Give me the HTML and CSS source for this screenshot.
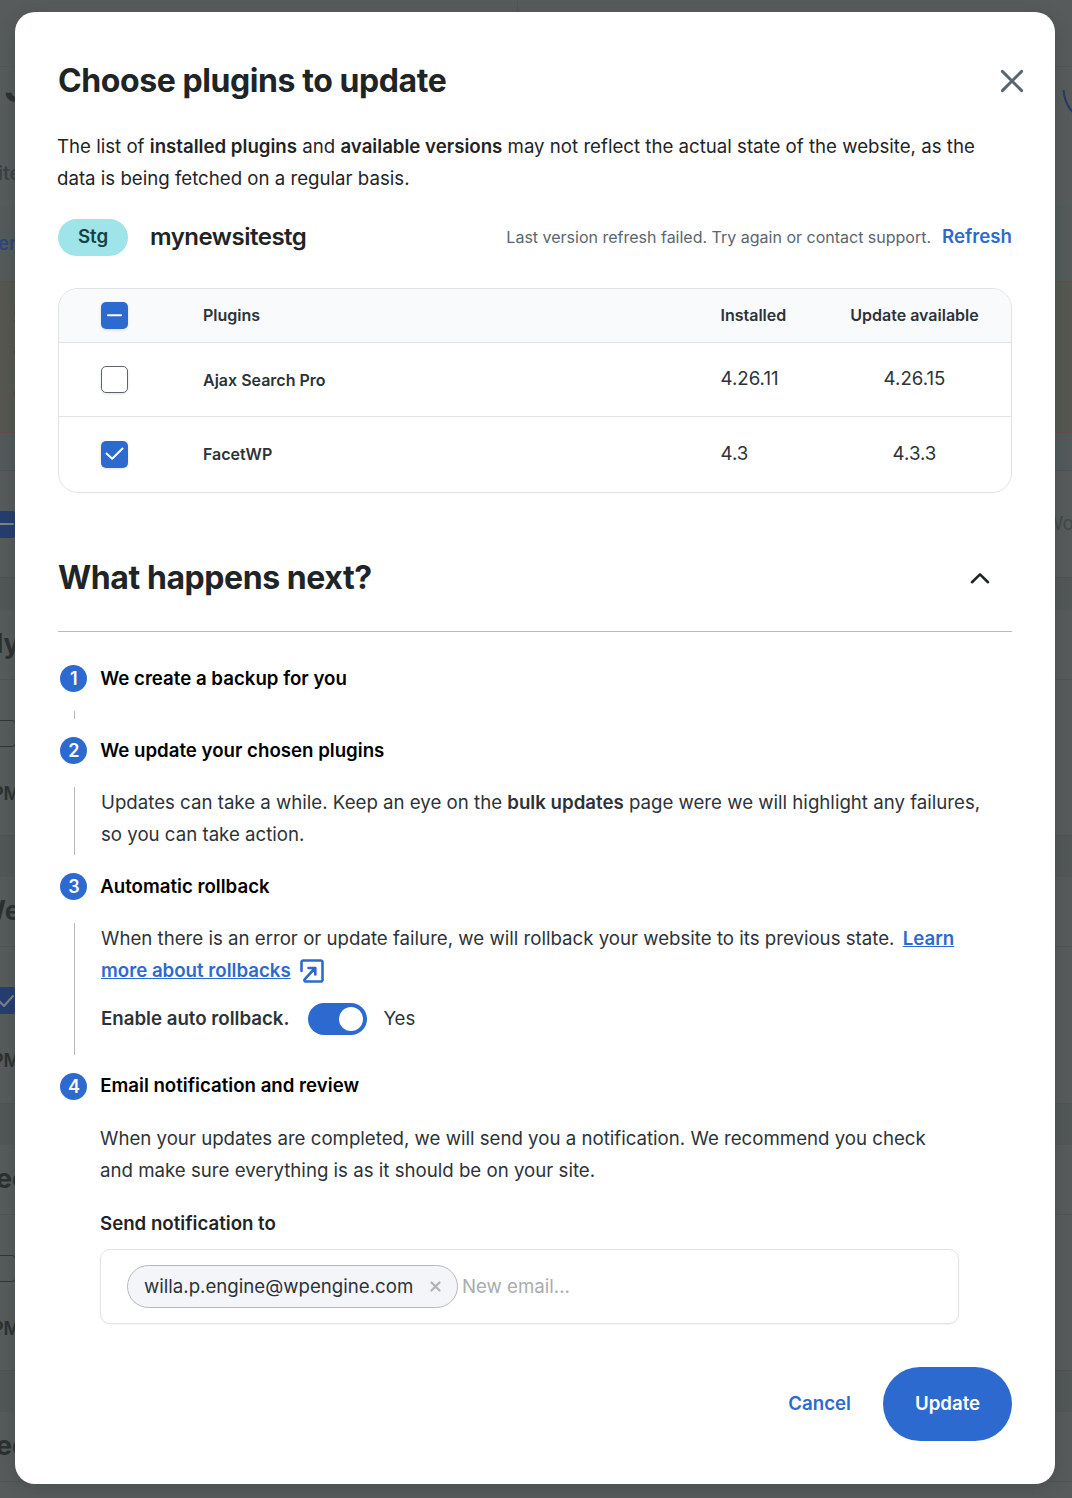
FILE: index.html
```html
<!DOCTYPE html>
<html lang="en">
<head>
    <meta charset="UTF-8">
    <meta name="viewport" content="width=device-width, initial-scale=1.0">
    <title>Choose plugins to update</title>
    <link rel="stylesheet" href="styles.css">
</head>
<body>

    <!-- Page behind the modal -->
    <div class="page" aria-hidden="true">
        <div class="page-top"><div class="page-top-left"></div></div>
        <div class="page-nav"></div>
        <div class="page-title">
            <span class="page-heading">S</span>
            <svg class="ring" width="10" height="34" viewBox="0 0 10 34"><circle cx="37.5" cy="-2" r="36"/></svg>
        </div>
        <div class="page-sub"><span>ites</span></div>
        <div class="page-tabs"><span>er</span></div>
        <div class="page-notice"><span>S</span><span>v</span><span>c</span></div>
        <div class="page-gap"></div>
        <div class="page-head">
            <span class="page-box page-box-on"><svg width="28" height="28" viewBox="0 0 28 28"><path d="M8 13h17"/></svg></span>
            <span class="page-word">Wo</span>
        </div>
        <div class="page-band page-band-first"></div>
        <div class="page-site"><span class="shift-ly">ly</span></div>
        <div class="page-item"><span class="page-box"></span><b>PM</b></div>
        <div class="page-band"></div>
        <div class="page-site"><span class="shift-we">We</span></div>
        <div class="page-item page-item-on"><span class="page-box page-box-on"><svg width="28" height="28" viewBox="0 0 28 28"><path d="M11 14l5 5 9-10"/></svg></span><b>PM</b></div>
        <div class="page-band"></div>
        <div class="page-site"><span>ee</span></div>
        <div class="page-item"><span class="page-box"></span><b>PM</b></div>
        <div class="page-band"></div>
        <div class="page-site"><span>ee</span></div>
        <div class="page-rest"></div>
    </div>

    <div class="modal" role="dialog">
        <div class="modal-header">
            <h1>Choose plugins to update</h1>
            <button class="close-button" aria-label="Close">
                <svg width="24" height="24" viewBox="0 0 24 24"><path d="M2.4 2.4l19.2 19.2M21.6 2.4L2.4 21.6"/></svg>
            </button>
        </div>

        <p class="intro">The list of <b>installed plugins</b> and <b>available versions</b> may not reflect the actual state of the website, as the<br>data is being fetched on a regular basis.</p>

        <div class="site">
            <span class="badge">Stg</span>
            <h2>mynewsitestg</h2>
            <span class="refresh-note">Last version refresh failed. Try again or contact support.</span>
            <a class="refresh">Refresh</a>
        </div>

        <div class="plugins">
            <div class="row row-head">
                <span class="check check-on"><svg width="27" height="27" viewBox="0 0 27 27"><path d="M7 13.2h13"/></svg></span>
                <span>Plugins</span>
                <span>Installed</span>
                <span class="center">Update available</span>
            </div>
            <div class="row">
                <span class="check"></span>
                <b>Ajax Search Pro</b>
                <span class="version">4.26.11</span>
                <span class="version center">4.26.15</span>
            </div>
            <div class="row row-last">
                <span class="check check-on"><svg width="27" height="27" viewBox="0 0 27 27"><path d="M5.5 12.5l5.7 5.3L21.5 7.5"/></svg></span>
                <b>FacetWP</b>
                <span class="version">4.3</span>
                <span class="version center">4.3.3</span>
            </div>
        </div>

        <div class="next-header">
            <h1>What happens next?</h1>
            <svg width="22" height="14" viewBox="0 0 22 14"><path d="M3 11.2l8-7.8 8 7.8"/></svg>
        </div>

        <div class="step step-1">
            <div class="step-title"><span class="number">1</span><h3>We create a backup for you</h3></div>
            <div class="step-body"></div>
        </div>

        <div class="step step-2">
            <div class="step-title"><span class="number">2</span><h3>We update your chosen plugins</h3></div>
            <div class="step-body">
                <p>Updates can take a while. Keep an eye on the <b>bulk updates</b> page were we will highlight any failures,<br>so you can take action.</p>
            </div>
        </div>

        <div class="step step-3">
            <div class="step-title"><span class="number">3</span><h3>Automatic rollback</h3></div>
            <div class="step-body">
                <p>When there is an error or update failure, we will rollback your website to its previous state. <a class="learn">Learn</a></p>
                <p class="link-line"><a>more about rollbacks</a>
                    <svg width="24" height="24" viewBox="0 0 24 24"><path d="M1.5 12V3.3a1.8 1.8 0 0 1 1.8-1.8h17.4a1.8 1.8 0 0 1 1.8 1.8v17.4a1.8 1.8 0 0 1-1.8 1.8H5.6a1.3 1.3 0 0 1-.9-2.2L15 9M8.5 9h6.8v6.5"/></svg>
                </p>
                <div class="rollback">
                    <b>Enable auto rollback.</b>
                    <span class="toggle"><span class="knob"></span></span>
                    <span>Yes</span>
                </div>
            </div>
        </div>

        <div class="step step-4">
            <div class="step-title"><span class="number">4</span><h3>Email notification and review</h3></div>
            <div class="step-body">
                <p>When your updates are completed, we will send you a notification. We recommend you check<br>and make sure everything is as it should be on your site.</p>
                <h4>Send notification to</h4>
                <div class="emails">
                    <span class="chip">willa.p.engine@wpengine.com
                        <svg width="11" height="11" viewBox="0 0 11 11"><path d="M1.5 1.5l8 8M9.5 1.5l-8 8"/></svg>
                    </span>
                    <span class="placeholder">New email...</span>
                </div>
            </div>
        </div>

        <div class="actions">
            <button class="cancel">Cancel</button>
            <button class="update">Update</button>
        </div>
    </div>

</body>
</html>
```
FILE: styles.css
```css
* {
    box-sizing: border-box;
}

body {
    margin: 0;
    width: 1072px;
    height: 1498px;
    overflow: hidden;
    position: relative;
    font-family: Inter, sans-serif;
    font-size: 18.66px;
    line-height: 32px;
    color: #2c3338;
    background: #565a5a;
}

h1, h2, h3, h4, p {
    margin: 0;
}

b {
    font-weight: 600;
}

svg {
    display: block;
    fill: none;
    stroke-linecap: round;
    stroke-linejoin: round;
}

button {
    border: none;
    background: none;
    padding: 0;
    font: inherit;
}

/* Page behind */
.page {
    overflow: hidden;
    height: 1498px;
    background: #575b5b;
    color: #2c3031;
    white-space: nowrap;
}

.page-top {
    height: 67px;
    border-bottom: 1px solid #515656;
}

.page-top-left {
    width: 518px;
    height: 12px;
    border-right: 1px solid #515555;
}

.page-nav {
    height: 23px;
}

.page-title {
    height: 66px;
    display: flex;
    justify-content: space-between;
    overflow: hidden;
}

.page-heading {
    font-size: 40px;
    font-weight: 700;
    line-height: 40px;
    margin: -22px 0 0 4px;
}

.ring {
    stroke: #253a66;
    stroke-width: 2;
    overflow: hidden;
}

.page-sub {
    height: 50px;
    line-height: 36px;
    color: #3c4244;
    font-size: 19px;
    font-weight: 600;
}

.page-sub span {
    margin-left: -2px;
}

.page-tabs {
    height: 75px;
    line-height: 75px;
    background: #545b5b;
    color: #2f4677;
    font-weight: 600;
}

.page-tabs span {
    margin-left: -2px;
}

.page-notice {
    height: 152px;
    padding: 20px 0 0 13px;
    display: flex;
    flex-direction: column;
    gap: 6px;
    background: #565850;
    border-top: 1px solid #5f504a;
    border-bottom: 1px solid #664d48;
    color: #663b38;
}

.page-gap {
    height: 38px;
    background: #535a5b;
    border-bottom: 1px solid #4f5455;
}

.page-head {
    height: 106px;
    display: flex;
    align-items: center;
    justify-content: space-between;
}

.page-word {
    width: 27px;
    color: #424848;
    font-size: 18.66px;
}

.page-box {
    display: block;
    width: 28px;
    height: 27px;
    margin-left: -12px;
    border: 1px solid #303536;
    border-radius: 4px;
    flex: none;
}

.page-box-on {
    border: none;
    background: #253e70;
}

.page-box svg {
    stroke: #7d8389;
    stroke-width: 2;
}

.page-band {
    height: 42px;
    background: #535758;
    border-top: 1px solid #4f5354;
}

.page-band-first {
    height: 33px;
}

.page-site {
    height: 70px;
    line-height: 68px;
    border-bottom: 1px solid #505455;
    font-size: 27px;
    font-weight: 700;
}

.page-site span {
    margin-left: -4px;
}

.page-site .shift-we {
    margin-left: -22px;
}

.page-item {
    height: 155px;
    padding-top: 40px;
}

.page-item-on {
    height: 156px;
}

.page-item b {
    display: block;
    margin: 31px 0 0 -8px;
    font-size: 18px;
}

/* Modal */
.modal {
    position: absolute;
    left: 15px;
    top: 12px;
    width: 1040px;
    height: 1472px;
    padding: 49px 43px 0;
    background: #fff;
    border-radius: 20px;
    box-shadow: 0 4px 16px rgba(40, 50, 50, .3);
    white-space: nowrap;
}

.modal-header {
    display: flex;
    justify-content: space-between;
    height: 70px;
}

h1 {
    font-size: 32px;
    line-height: 40px;
    font-weight: 700;
    letter-spacing: -0.42px;
    color: #1f2426;
}

.close-button {
    width: 24px;
    height: 24px;
    margin: 8px -12px 0 0;
}

.close-button svg {
    stroke: #5a666d;
    stroke-width: 2.9;
}

.intro {
    margin-left: -1px;
    color: #1f2426;
}

.site {
    display: flex;
    align-items: center;
    height: 37px;
    margin-top: 24px;
}

.badge {
    width: 70px;
    height: 37px;
    border-radius: 19px;
    line-height: 35px;
    text-align: center;
    font-weight: 600;
    background: #9fe4e8;
    color: #164045;
}

h2 {
    margin: -2px 0 0 22px;
    font-size: 24px;
    font-weight: 600;
    letter-spacing: -0.5px;
    color: #1f2426;
}

.refresh-note {
    margin: -2px 0 0 auto;
    font-size: 16px;
    color: #5a666d;
}

.refresh {
    margin: -2px 0 0 11px;
    font-weight: 600;
}

a {
    color: #2d6acf;
}

.plugins {
    height: 205px;
    margin-top: 32px;
    border: 1px solid #dfe3e6;
    border-radius: 20px;
    overflow: hidden;
}

.row {
    display: grid;
    grid-template-columns: 102px 517.5px 98px 192px;
    align-items: center;
    height: 74px;
    padding-left: 42px;
    border-bottom: 1px solid #dfe3e6;
    font-size: 16px;
}

.row-head {
    height: 54px;
    background: #f9fafc;
    font-weight: 600;
    line-height: 30px;
}

.row-head > span:not(.check) {
    padding-bottom: 2px;
}

.row-last {
    border-bottom: none;
}

.center {
    text-align: center;
}

.version {
    font-size: 18.66px;
    padding-bottom: 2px;
}

.row-last .version {
    padding-bottom: 1px;
}

.check {
    width: 27px;
    height: 27px;
    border: 1px solid #5a666d;
    border-radius: 5px;
    box-shadow: 0 1px 3px rgba(0, 0, 0, .12);
}

.check-on {
    border: none;
    background: #2d6acf;
}

.check-on svg {
    stroke: #fff;
    stroke-width: 2;
}

.next-header {
    display: flex;
    align-items: center;
    justify-content: space-between;
    height: 107px;
    margin-top: 32px;
    padding-right: 21px;
    border-bottom: 1px solid #b4bcbe;
    margin-bottom: 31px;
}

.next-header svg {
    stroke: #1f2426;
    stroke-width: 2.6;
}

/* Steps */
.step-title {
    display: flex;
    align-items: center;
    height: 32px;
    padding-left: 2.4px;
}

.number {
    width: 27px;
    height: 27px;
    margin-bottom: 1px;
    border-radius: 50%;
    line-height: 27px;
    text-align: center;
    font-size: 18px;
    font-weight: 600;
    background: #2d6acf;
    color: #fff;
}

.step-4 .number {
    margin-bottom: 0;
}

h3 {
    margin-left: 12.8px;
    font-size: 18.66px;
    font-weight: 600;
    color: #000;
}

.step-body {
    margin: 20px 0 16px 16px;
    padding-left: 26px;
    border-left: 1px solid #b4bcbe;
}

.step-1 .step-body {
    height: 8px;
    margin: 16px 0 16px 16px;
}

.step-2 .step-body {
    height: 68px;
}

.step-3 .step-body {
    height: 132px;
    margin-bottom: 15px;
}

.step-4 .step-body {
    margin-top: 21px;
    border-left: none;
}

.step-body a {
    font-weight: 600;
    text-decoration: underline;
}

.learn {
    margin-left: 3px;
}

.link-line {
    display: flex;
    align-items: center;
    gap: 9px;
}

.link-line svg {
    stroke: #2d6acf;
    stroke-width: 2.6;
}

.rollback {
    display: flex;
    align-items: center;
    margin-top: 16px;
}

.toggle {
    display: flex;
    justify-content: flex-end;
    width: 59px;
    height: 32px;
    margin: 0 16px 0 19px;
    padding: 4px;
    border-radius: 16px;
    background: #2d6acf;
}

.knob {
    width: 24px;
    height: 24px;
    border-radius: 50%;
    background: #fff;
}

h4 {
    margin-top: 21px;
    font-size: 18.66px;
    font-weight: 600;
    color: #1f2426;
}

.emails {
    display: flex;
    align-items: center;
    width: 859px;
    height: 75px;
    margin-top: 9px;
    padding-left: 26px;
    border: 1px solid #dfe3e3;
    border-radius: 10px;
    box-shadow: 0 1px 2px rgba(0, 0, 0, .05);
}

.chip {
    display: flex;
    align-items: center;
    justify-content: space-between;
    width: 331px;
    height: 43px;
    padding: 0 16px;
    border: 1px solid #b6b9bc;
    border-radius: 22px;
    background: #f4f5f8;
}

.chip svg {
    stroke: #b0b3b5;
    stroke-width: 2.2;
}

.placeholder {
    margin-left: 4px;
    color: #a9acae;
}

.actions {
    display: flex;
    justify-content: flex-end;
    align-items: center;
    margin-top: 43px;
}

.cancel {
    margin-right: 32px;
    font-weight: 600;
    color: #2d6acf;
}

.update {
    width: 129px;
    height: 74px;
    border-radius: 37px;
    font-weight: 600;
    background: #2d6acf;
    color: #fff;
}
```
